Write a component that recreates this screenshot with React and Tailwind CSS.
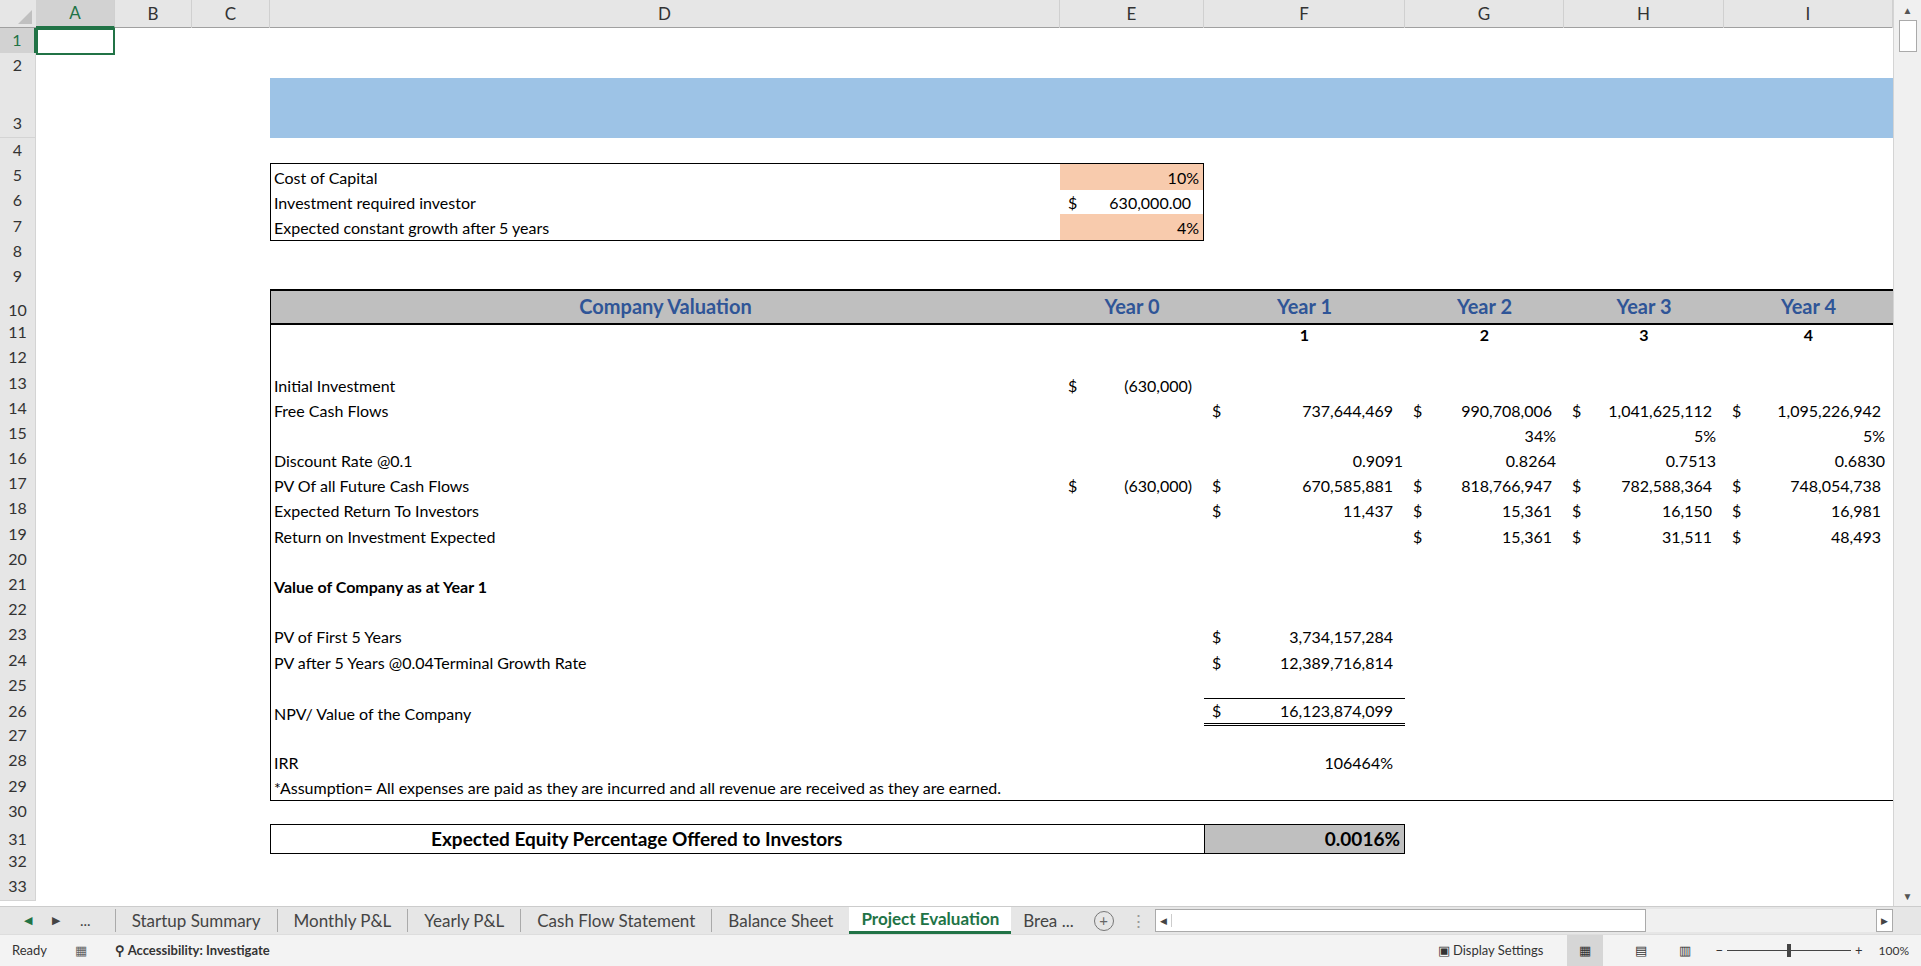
import React from 'react';

const COLS = 'grid-cols-[36px_79px_77px_78px_790px_144px_201px_159px_160px_169px]';
const LETTERS = ['A', 'B', 'C', 'D', 'E', 'F', 'G', 'H', 'I'];
const FONT = { fontFamily: 'Lato, "Open Sans", sans-serif' };

const H = {
  1: 25, 2: 25, 3: 60, 10: 31,
};

function Acc({ v, bold }) {
  return (
    <div className={`flex justify-between items-end h-full px-2 ${bold ? 'font-bold' : ''}`}>
      <span>$</span>
      <span className="pr-1">{v}</span>
    </div>
  );
}
const R = ({ v, pr = 'pr-3', bold }) => (
  <div className={`flex justify-end items-end h-full ${pr} ${bold ? 'font-bold' : ''}`}>{v}</div>
);
const L = ({ v, bold }) => <div className={`flex items-end h-full pl-[3px] ${bold ? 'font-bold' : ''}`}>{v}</div>;
const C = ({ v, cls = '' }) => <div className={`flex items-end justify-center h-full ${cls}`}>{v}</div>;

const box = 'border-l border-black';
const yr = 'font-bold text-[#2f5597] text-[20px] pb-0.5';
const gray = 'bg-[#bfbfbf] border-y-2 border-black';
const rowsData = {
  3: { cls: { D: 'bg-[#9dc3e6]', E: 'bg-[#9dc3e6]', F: 'bg-[#9dc3e6]', G: 'bg-[#9dc3e6]', H: 'bg-[#9dc3e6]', I: 'bg-[#9dc3e6]' } },
  5: { D: <L v="Cost of Capital" />, E: <R v="10%" pr="pr-1" />, cls: { D: 'border-l border-t border-black', E: 'bg-[#f8cbad] border-t border-r border-black' } },
  6: { D: <L v="Investment required investor" />, E: <Acc v="630,000.00" />, cls: { D: 'border-l border-black', E: 'border-r border-black' } },
  7: { D: <L v="Expected constant growth after 5 years" />, E: <R v="4%" pr="pr-1" />, cls: { D: 'border-l border-b border-black', E: 'bg-[#f8cbad] border-b border-r border-black' } },
  10: {
    D: <C v="Company Valuation" cls={yr} />,
    E: <C v="Year 0" cls={yr} />,
    F: <C v="Year 1" cls={yr} />,
    G: <C v="Year 2" cls={yr} />,
    H: <C v="Year 3" cls={yr} />,
    I: <C v="Year 4" cls={yr} />,
    cls: { D: `${gray} border-l`, E: gray, F: gray, G: gray, H: gray, I: gray },
  },
  11: { F: <C v="1" cls="font-bold" />, G: <C v="2" cls="font-bold" />, H: <C v="3" cls="font-bold" />, I: <C v="4" cls="font-bold" /> },
  13: { D: <L v="Initial Investment" />, E: <Acc v="(630,000)" /> },
  14: { D: <L v="Free Cash Flows" />, F: <Acc v="737,644,469" />, G: <Acc v="990,708,006" />, H: <Acc v="1,041,625,112" />, I: <Acc v="1,095,226,942" /> },
  15: { G: <R v="34%" pr="pr-2" />, H: <R v="5%" pr="pr-2" />, I: <R v="5%" pr="pr-2" /> },
  16: { D: <L v="Discount Rate @0.1" />, F: <R v="0.9091" pr="pr-0.5" />, G: <R v="0.8264" pr="pr-2" />, H: <R v="0.7513" pr="pr-2" />, I: <R v="0.6830" pr="pr-2" /> },
  17: { D: <L v="PV Of all Future Cash Flows" />, E: <Acc v="(630,000)" />, F: <Acc v="670,585,881" />, G: <Acc v="818,766,947" />, H: <Acc v="782,588,364" />, I: <Acc v="748,054,738" /> },
  18: { D: <L v="Expected Return To Investors" />, F: <Acc v="11,437" />, G: <Acc v="15,361" />, H: <Acc v="16,150" />, I: <Acc v="16,981" /> },
  19: { D: <L v="Return on Investment Expected" />, G: <Acc v="15,361" />, H: <Acc v="31,511" />, I: <Acc v="48,493" /> },
  21: { D: <L v="Value of Company as at Year 1" bold /> },
  23: { D: <L v="PV of First 5 Years" />, F: <Acc v="3,734,157,284" /> },
  24: { D: <L v="PV after 5 Years @0.04Terminal Growth Rate" />, F: <Acc v="12,389,716,814" /> },
  26: { D: <L v="NPV/ Value of the Company" />, F: <Acc v="16,123,874,099" />, cls: { F: 'border-t border-b-[3px] border-double border-black' } },
  28: { D: <L v="IRR" />, F: <R v="106464%" /> },
  29: { D: <L v="*Assumption= All expenses are paid as they are incurred and all revenue are received as they are earned." />, cls: { D: 'border-l border-b border-black', E: 'border-b border-black', F: 'border-b border-black', G: 'border-b border-black', H: 'border-b border-black', I: 'border-b border-black' } },
  31: {
    D: <div className="flex items-end h-full pl-[160px] font-bold text-[19px] whitespace-nowrap">Expected Equity Percentage Offered to Investors</div>,
    F: <R v="0.0016%" pr="pr-1" bold />,
    cls: { D: 'border-l border-y border-black', E: 'border-y border-black', F: 'bg-[#bfbfbf] border border-black text-[19px]' },
  },
};
for (let r = 11; r <= 28; r++) {
  rowsData[r] = rowsData[r] || {};
  rowsData[r].cls = { ...(rowsData[r].cls || {}), D: `${(rowsData[r].cls || {}).D || ''} ${box}` };
}

function Sheet() {
  const rows = [];
  for (let r = 1; r <= 33; r++) {
    const d = rowsData[r] || {};
    const h = H[r] || 25.2;
    rows.push(
      <div key={r} className={`grid ${COLS}`} style={{ height: h }}>
        <div className={`flex items-end justify-center pb-0.5 border-b border-r border-[#d4d4d4] ${r === 1 ? 'bg-[#d2d2d2] text-[#217346] border-r-2 border-r-[#217346]' : 'bg-[#e6e6e6] text-[#333]'}`}>{r}</div>
        {LETTERS.map(l => (
          <div key={l} className={`relative overflow-visible whitespace-nowrap ${(d.cls || {})[l] || ''} ${r === 1 && l === 'A' ? 'border-2 border-[#217346]' : ''}`}>
            {d[l]}
            {r === 3 && l === 'D' && (
              <div className="absolute left-0 bottom-1 w-[1926px] text-center font-bold text-[30px] text-black whitespace-nowrap">Project Evaluation</div>
            )}
          </div>
        ))}
      </div>
    );
  }
  return <div className="flex-1 overflow-hidden">{rows}</div>;
}

export default function App() {
  return (
    <div className="w-[1921px] h-[966px] flex flex-col bg-white text-[16px] text-black overflow-hidden" style={FONT}>
      <div className="flex h-[906px]">
        <div className="flex flex-col w-[1893px]">
          <div className={`grid ${COLS} h-[28px] bg-[#e6e6e6] border-b border-[#a0a0a0] text-[17px] text-[#333]`}>
            <div className="flex items-end justify-end p-1"><div className="w-0 h-0 border-l-[14px] border-l-transparent border-b-[14px] border-b-[#c0c0c0]" /></div>
            {LETTERS.map(l => (
              <div key={l} className={`flex items-center justify-center border-r border-[#d0d0d0] ${l === 'A' ? 'bg-[#d2d2d2] text-[#217346] border-b-2 border-b-[#217346]' : ''}`}>{l}</div>
            ))}
          </div>
          <Sheet />
        </div>
        <div className="w-[28px] bg-[#f0f0f0] border-l border-[#d4d4d4] flex flex-col items-center">
          <div className="h-[20px] w-full flex items-center justify-center text-[10px] text-[#555]">▲</div>
          <div className="w-[18px] h-[32px] bg-white border border-[#aaa]" />
          <div className="flex-1" />
          <div className="h-[20px] w-full flex items-center justify-center text-[10px] text-[#555]">▼</div>
        </div>
      </div>
      <div className="h-[28px] bg-[#e6e6e6] flex items-stretch text-[17px] text-[#444] border-t border-[#ccc]">
        <div className="flex items-center gap-5 px-6 text-[#217346] text-[11px]">
          <span>◀</span><span className="text-[#444]">▶</span><span className="text-[#444] text-[15px]">...</span>
        </div>
        {['Startup Summary', 'Monthly P&L', 'Yearly P&L', 'Cash Flow Statement', 'Balance Sheet'].map(t => (
          <div key={t} className="flex items-center px-4 border-l border-[#aaa] my-0.5">{t}</div>
        ))}
        <div className="flex items-center px-3 bg-white text-[#217346] font-bold border-b-[3px] border-[#217346]">Project Evaluation</div>
        <div className="flex items-center px-3">Brea ...</div>
        <div className="flex items-center px-2">
          <div className="w-5 h-5 rounded-full border border-[#777] flex items-center justify-center text-[15px] leading-none text-[#666]">+</div>
        </div>
        <div className="flex items-center px-2 text-[#999]">⋮</div>
        <div className="flex items-center w-[491px] my-0.5 border border-[#aaa] bg-white">
          <span className="text-[9px] px-1 border-r border-[#ccc]">◀</span>
          <div className="flex-1" />
        </div>
        <div className="flex-1 my-0.5 bg-[#f0f0f0]" />
        <div className="flex items-center px-1 my-0.5 bg-white border border-[#aaa] text-[9px]">▶</div>
        <div className="w-[28px]" />
      </div>
      <div className="flex-1 bg-[#f3f3f3] flex items-center text-[13px] text-[#333] border-t border-[#ddd]">
        <span className="pl-3 w-[75px]">Ready</span>
        <span className="w-[40px] text-[#666]">▦</span>
        <span className="font-bold">⚲ Accessibility: Investigate</span>
        <div className="flex-1" />
        <span className="mr-6">▣ Display Settings</span>
        <div className="flex items-center gap-8 h-full">
          <span className="bg-[#d6d6d6] h-full px-3 flex items-center">▦</span>
          <span>▤</span><span>▥</span>
        </div>
        <div className="flex items-center ml-6 gap-1">
          <span>−</span>
          <div className="relative w-[124px] h-[1px] bg-[#444]"><div className="absolute left-[60px] -top-[6px] w-[4px] h-[13px] bg-[#444]" /></div>
          <span>+</span>
          <span className="ml-3 mr-3 text-[12px]">100%</span>
        </div>
      </div>
    </div>
  );
}
